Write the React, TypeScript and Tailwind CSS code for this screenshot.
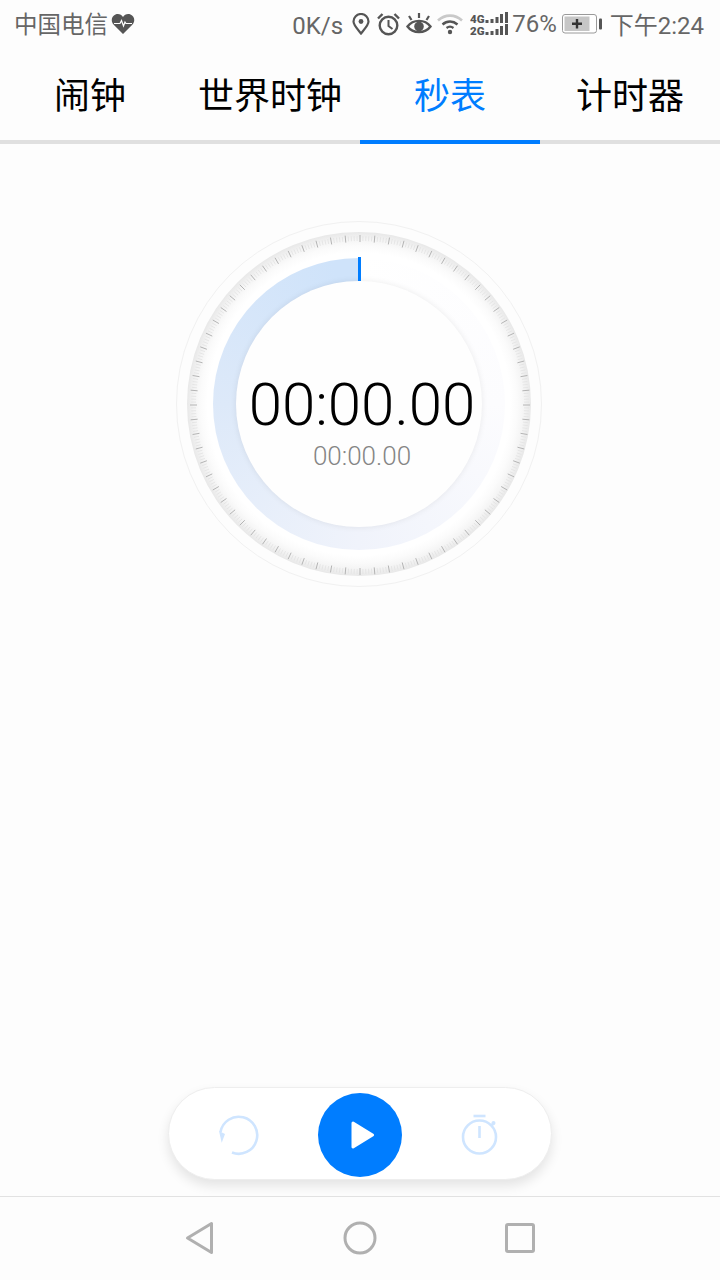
import React from "react";

function Heart() {
  return (
    <svg width="24" height="22" viewBox="0 0 24 22" className="ml-[3px]">
      <path d="M12 21 L2.5 11.5 C-0.5 8 0.5 3 4.5 1.5 C7.5 0.5 10.5 1.5 12 4 C13.5 1.5 16.5 0.5 19.5 1.5 C23.5 3 24.5 8 21.5 11.5 Z" fill="#555" />
      <path d="M3 10.5 H9 L10.5 7.5 L12.5 13 L14 9 L15 10.5 H21" fill="none" stroke="#fff" strokeWidth="1.2" />
    </svg>
  );
}

function StatusIcons() {
  return (
    <>
      <svg width="18" height="22" viewBox="0 0 18 22" className="mr-[7px]">
        <path d="M9 20.5 C5 15.5 1.5 12 1.5 8.5 A7.5 7.5 0 0 1 16.5 8.5 C16.5 12 13 15.5 9 20.5 Z" fill="none" stroke="#555" strokeWidth="2.2" />
        <circle cx="9" cy="8.5" r="2.4" fill="#555" />
      </svg>
      <svg width="23" height="24" viewBox="0 0 23 24" className="mr-[6px]">
        <circle cx="11.5" cy="13.5" r="8.8" fill="none" stroke="#555" strokeWidth="2.4" />
        <path d="M11.5 8 V14 L15.5 17" fill="none" stroke="#555" strokeWidth="2" />
        <path d="M1 6.5 L5.5 2 M22 6.5 L17.5 2" stroke="#555" strokeWidth="2.4" />
      </svg>
      <svg width="26" height="24" viewBox="0 0 26 24" className="mr-[5px]">
        <path d="M1.5 14.5 C7 7 19 7 24.5 14.5 C19 22 7 22 1.5 14.5 Z" fill="none" stroke="#555" strokeWidth="2.4" />
        <circle cx="13" cy="14.5" r="4.8" fill="#555" />
        <path d="M5.5 8 L3 4 M13 6 V1 M20.5 8 L23 4" stroke="#555" strokeWidth="2.2" />
      </svg>
      <svg width="26" height="22" viewBox="0 0 26 22" className="mr-[7px]">
        <path d="M1 7.5 C8 1 18 1 25 7.5" fill="none" stroke="#c9c9c9" strokeWidth="2.6" />
        <path d="M5.5 11.5 C10 7.5 16 7.5 20.5 11.5" fill="none" stroke="#555" strokeWidth="2.4" />
        <path d="M9.5 15 C11.5 13.5 14.5 13.5 16.5 15" fill="none" stroke="#555" strokeWidth="2.2" />
        <circle cx="13" cy="19" r="2.2" fill="#555" />
      </svg>
      <svg width="38" height="24" viewBox="0 0 38 24">
        <text x="0" y="10.500" fontSize="11.500" fontWeight="900" fontFamily="Roboto, sans-serif" fill="#555">4G</text>
        <text x="0" y="22.500" fontSize="11.500" fontWeight="900" fontFamily="Roboto, sans-serif" fill="#555">2G</text>
        <rect x="15.500" y="8" width="3" height="3" fill="#555" />
        <rect x="20.500" y="7" width="3" height="4" fill="#555" />
        <rect x="25.500" y="5" width="3" height="6" fill="#555" />
        <rect x="30" y="2" width="3" height="9" fill="#555" />
        <rect x="35" y="0" width="3" height="11" fill="#555" />
        <rect x="15.500" y="20" width="3" height="3" fill="#555" />
        <rect x="20.500" y="19" width="3" height="4" fill="#555" />
        <rect x="25.500" y="17" width="3" height="6" fill="#555" />
        <rect x="30" y="14" width="3" height="9" fill="#555" />
        <rect x="35" y="12" width="3" height="11" fill="#555" />
      </svg>
    </>
  );
}

function Battery() {
  return (
    <svg width="40" height="20" viewBox="0 0 40 20">
      <rect x="0.500" y="0.500" width="34" height="18.500" rx="2.500" fill="#fff" stroke="#9a9a9a" />
      <rect x="2.500" y="2.500" width="25" height="14.500" fill="#c6c6c6" />
      <path d="M10 9.700 H20 M15 5 V14.500" stroke="#333" strokeWidth="2.4" />
      <rect x="37" y="4.500" width="3" height="11" rx="1" fill="#555" />
    </svg>
  );
}

function Ticks() {
  const items = Array.from({ length: 360 }, (_, i) => i);
  return (
    <svg width="346" height="346" viewBox="-173 -173 346 346" className="absolute inset-[10px]">
      {items.map((i) => {
        const major = i % 5 === 0;
        const a = (i * Math.PI) / 180;
        const r1 = major ? 163 : 164;
        const r2 = major ? 170 : 169;
        return (
          <line
            key={i}
            x1={Math.sin(a) * r1}
            y1={-Math.cos(a) * r1}
            x2={Math.sin(a) * r2}
            y2={-Math.cos(a) * r2}
            stroke={major ? "#b4b4b4" : "#e2e2e2"}
            strokeWidth={major ? 1 : 0.8}
          />
        );
      })}
    </svg>
  );
}

function Dial() {
  return (
    <div className="relative ml-[176px] mt-[77px] flex h-[366px] w-[366px] items-center justify-center rounded-full border border-[#f1f1f1]">
      <div className="absolute inset-[10px] rounded-full bg-[radial-gradient(circle_closest-side,#ffffff_0%,#ffffff_88%,#fbfbfb_92%,#f4f4f4_96%,#e8e8e8_100%)]" />
      <Ticks />
      <div className="absolute inset-[36px] rounded-full bg-[conic-gradient(#ffffff_0deg,#fcfcfe_90deg,#f0f3fb_180deg,#dde9f9_270deg,#cfe3fa_350deg,#cfe3fa_360deg)]" />
      <div className="absolute inset-[59px] rounded-full bg-[#fefefe] shadow-[0_0_6px_rgba(0,0,0,0.08)]" />
      <div className="absolute left-[181px] top-[35px] h-[24px] w-[3px] bg-[#007dff]" />
      <div className="relative ml-[6px] mt-[34px] flex flex-col items-center font-['Roboto',sans-serif] font-light">
        <div className="text-[60px] leading-[70px] text-black">00:00.00</div>
        <div className="text-[26px] leading-[32px] text-[#858585]">00:00.00</div>
      </div>
    </div>
  );
}

function Tab({ label, active }: { label: string; active?: boolean }) {
  return (
    <div
      className={
        "flex h-[96px] w-[180px] items-center justify-center border-b-4 pb-[2px] text-[36px] " +
        (active ? "border-[#007dff] text-[#007dff]" : "border-[#e0e0e0] text-black")
      }
    >
      {label}
    </div>
  );
}

export default function App() {
  return (
    <div className="flex h-[1280px] w-[720px] flex-col overflow-hidden bg-[#fdfdfd] font-['Noto_Sans_CJK_SC','Noto_Sans',sans-serif]">
      <div className="flex h-[48px] items-center justify-between pl-[14px] pr-[16px] text-[24px] text-[#666]">
        <div className="flex items-center">
          <span className="text-[23.500px]">中国电信</span>
          <Heart />
        </div>
        <div className="flex items-center font-['Roboto','Noto_Sans_CJK_SC',sans-serif]">
          <span className="mr-[9px] mt-[4px]">0K/s</span>
          <div className="flex items-center">
            <StatusIcons />
          </div>
          <span className="ml-[4px]">76%</span>
          <div className="ml-[5px]"><Battery /></div>
          <span className="ml-[8px] mt-[4px]">下午2:24</span>
        </div>
      </div>

      <div className="flex">
        <Tab label="闹钟" />
        <Tab label="世界时钟" />
        <Tab label="秒表" active />
        <Tab label="计时器" />
      </div>

      <Dial />

      <div className="flex-1" />

      <div className="mx-auto flex h-[93px] w-[384px] items-center justify-center rounded-full border border-[#eeeeee] bg-white pt-[2px] shadow-[0_6px_12px_rgba(0,0,0,0.1)]">
        <svg width="44" height="44" viewBox="0 0 44 44" className="mr-[56px]">
          <path d="M2.500 19 A18.500 18.500 0 1 1 14 39.500" fill="none" stroke="#cfe5ff" strokeWidth="2.600" />
          <path d="M1 18 L7 21 L3.700 29.700 Z" fill="#cfe5ff" />
        </svg>
        <div className="flex h-[84px] w-[84px] items-center justify-center rounded-full bg-[#007dff]">
          <svg width="24" height="28" viewBox="0 0 24 28" className="ml-[5px]">
            <path d="M2 2 L21.500 14 L2 26 Z" fill="#fff" stroke="#fff" strokeWidth="3" strokeLinejoin="round" />
          </svg>
        </div>
        <svg width="44" height="44" viewBox="0 0 44 44" className="ml-[56px]">
          <circle cx="21.500" cy="24" r="16.500" fill="none" stroke="#cfe5ff" strokeWidth="2.600" />
          <path d="M15.500 3 H27.500" stroke="#cfe5ff" strokeWidth="2.600" />
          <path d="M21.500 13 V25" stroke="#cfe5ff" strokeWidth="2.600" />
          <path d="M33 13 L36 10" stroke="#cfe5ff" strokeWidth="2.600" />
          <circle cx="35.500" cy="10" r="2" fill="#cfe5ff" />
        </svg>
      </div>

      <div className="mt-[16px] flex h-[84px] items-center justify-center gap-[112px] border-t border-[#e2e2e2] pb-[1px]">
        <svg width="48" height="40" viewBox="0 0 48 40">
          <path d="M35.500 5.500 V34.500 L11.500 20 Z" fill="none" stroke="#b0b0b0" strokeWidth="3" strokeLinejoin="round" />
        </svg>
        <svg width="48" height="40" viewBox="0 0 48 40">
          <circle cx="24" cy="20" r="15" fill="none" stroke="#b0b0b0" strokeWidth="3" />
        </svg>
        <svg width="48" height="40" viewBox="0 0 48 40">
          <rect x="10.500" y="6.500" width="27" height="27" rx="1.500" fill="none" stroke="#b0b0b0" strokeWidth="3" />
        </svg>
      </div>
    </div>
  );
}
